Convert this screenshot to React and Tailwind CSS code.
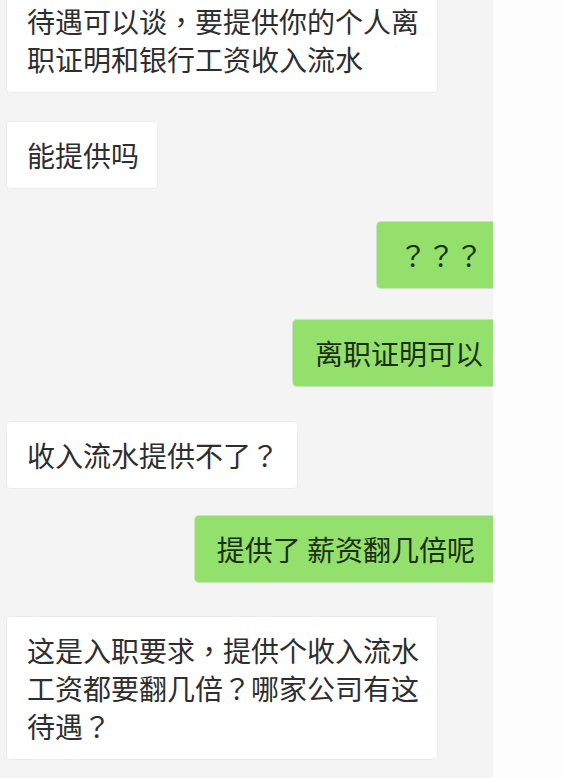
import React from "react";

const font = {
  fontFamily: '"Noto Sans CJK SC", "Noto Sans", sans-serif',
};

function P({ children }) {
  return <span style={{ fontFamily: '"Noto Sans CJK TC", "Noto Sans CJK SC", sans-serif' }}>{children}</span>;
}

function Left({ children, className = "" }) {
  return (
    <div
      className={
        "self-start ml-[7px] bg-white rounded-[4px] pl-[20px] pr-[18px] py-[14px] text-[28px] leading-[38px] text-[#2e2e2e] whitespace-nowrap shadow-[0_0_0_1px_rgba(0,0,0,0.03)] " +
        className
      }
    >
      {children}
    </div>
  );
}

function Right({ children, className = "" }) {
  return (
    <div
      className={
        "self-end bg-[#94e06c] rounded-[4px] pl-[22px] py-[14px] text-[28px] leading-[38px] text-[#1c2e14] whitespace-nowrap shadow-[0_0_0_1px_rgba(120,200,90,0.35)] " +
        className
      }
    >
      {children}
    </div>
  );
}

export default function App() {
  return (
    <div className="flex w-[564px] h-[778px] bg-[#fdfdfd] overflow-hidden" style={font}>
      <div className="w-[493px] h-[778px] bg-[#f4f4f4] overflow-hidden shrink-0">
        <div className="w-[501px] flex flex-col mt-[-12px]">
          <Left>
            待遇可以谈<P>，</P>要提供你的个人离
            <br />
            职证明和银行工资收入流水
          </Left>
          <Left className="mt-[30px]">能提供吗</Left>
          <Right className="mt-[34px] pr-[18px]">
            <P>？？？</P>
          </Right>
          <Right className="mt-[32px] pr-[18px]">离职证明可以</Right>
          <Left className="mt-[36px]">
            收入流水提供不了<P>？</P>
          </Left>
          <Right className="mt-[28px] pr-[26px] pl-[20px]">提供了 薪资翻几倍呢</Right>
          <Left className="mt-[35px]">
            这是入职要求<P>，</P>提供个收入流水
            <br />
            工资都要翻几倍<P>？</P>哪家公司有这
            <br />
            待遇<P>？</P>
          </Left>
        </div>
      </div>
      <div className="flex-1 bg-[#fdfdfd]" />
    </div>
  );
}
